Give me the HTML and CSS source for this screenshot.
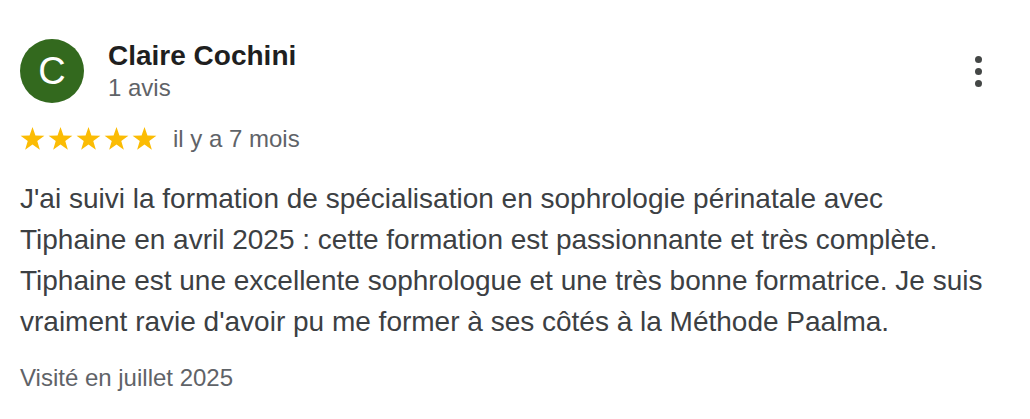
FILE: index.html
```html
<!DOCTYPE html>
<html lang="fr">
<head>
<meta charset="utf-8">
<title>Avis</title>
<link rel="stylesheet" href="styles.css">
</head>
<body>
<div class="review">
  <div class="header">
    <div class="avatar">C</div>
    <div class="author">
      <div class="name">Claire Cochini</div>
      <div class="count">1 avis</div>
    </div>
    <button class="menu" aria-label="Plus d'options">
      <span class="dot"></span><span class="dot"></span><span class="dot"></span>
    </button>
  </div>
  <div class="meta">
    <div class="stars">
      <svg class="star" viewBox="0 0 24 23"><polygon points="12,0 14.83,8.1 23.41,8.3 16.58,13.5 19.06,21.7 12,16.8 4.94,21.7 7.42,13.5 0.59,8.3 9.17,8.1"/></svg>
      <svg class="star" viewBox="0 0 24 23"><polygon points="12,0 14.83,8.1 23.41,8.3 16.58,13.5 19.06,21.7 12,16.8 4.94,21.7 7.42,13.5 0.59,8.3 9.17,8.1"/></svg>
      <svg class="star" viewBox="0 0 24 23"><polygon points="12,0 14.83,8.1 23.41,8.3 16.58,13.5 19.06,21.7 12,16.8 4.94,21.7 7.42,13.5 0.59,8.3 9.17,8.1"/></svg>
      <svg class="star" viewBox="0 0 24 23"><polygon points="12,0 14.83,8.1 23.41,8.3 16.58,13.5 19.06,21.7 12,16.8 4.94,21.7 7.42,13.5 0.59,8.3 9.17,8.1"/></svg>
      <svg class="star" viewBox="0 0 24 23"><polygon points="12,0 14.83,8.1 23.41,8.3 16.58,13.5 19.06,21.7 12,16.8 4.94,21.7 7.42,13.5 0.59,8.3 9.17,8.1"/></svg>
    </div>
    <span class="date">il y a 7 mois</span>
  </div>
  <p class="text">J'ai suivi la formation de spécialisation en sophrologie périnatale avec Tiphaine en avril 2025 : cette formation est passionnante et très complète. Tiphaine est une excellente sophrologue et une très bonne formatrice. Je suis vraiment ravie d'avoir pu me former à ses côtés à la Méthode Paalma.</p>
  <div class="visited">Visité en juillet 2025</div>
</div>
</body>
</html>
```

FILE: styles.css
```css
html, body {
  margin: 0;
  padding: 0;
  background: #ffffff;
}

body {
  font-family: "Liberation Sans", Arial, Helvetica, sans-serif;
}

.review {
  padding: 39px 20px 0 20px;
  width: 990px;
}

.header {
  display: flex;
  align-items: flex-start;
}

.avatar {
  width: 64px;
  height: 64px;
  border-radius: 50%;
  background: #33691e;
  color: #ffffff;
  font-size: 38px;
  line-height: 64px;
  text-align: center;
  flex: none;
}

.author {
  margin: 1px 0 0 24px;
  flex: 1;
}

.name {
  font-size: 28px;
  font-weight: 700;
  line-height: 32px;
  color: #1f1f1f;
}

.count {
  font-size: 24px;
  line-height: 32px;
  color: #5f6368;
}

.menu {
  display: flex;
  flex-direction: column;
  align-items: center;
  gap: 5px;
  border: 0;
  background: none;
  padding: 0;
  margin: 17px 28px 0 0;
  cursor: pointer;
}

.dot {
  width: 7px;
  height: 7px;
  border-radius: 50%;
  background: #444746;
}

.meta {
  display: flex;
  align-items: center;
  margin-top: 23px;
  height: 24px;
}

.stars {
  display: flex;
  gap: 3px;
}

.star {
  width: 25px;
  height: 24px;
  fill: #fbbc04;
}

.date {
  margin-left: 16px;
  font-size: 24px;
  line-height: 28px;
  color: #5f6368;
}

.text {
  margin: 27px 0 0 0;
  width: 975px;
  font-size: 28px;
  line-height: 41px;
  color: #3c4043;
}

.visited {
  margin-top: 20px;
  font-size: 24px;
  line-height: 32px;
  color: #5f6368;
}
```
